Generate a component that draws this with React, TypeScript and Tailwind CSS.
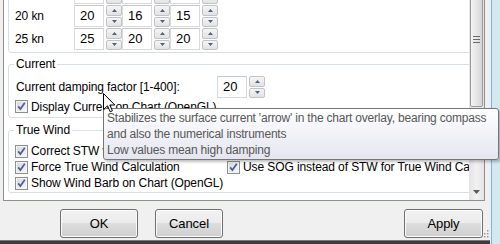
import type { ReactNode } from 'react'

// top row is scrolled almost out of view, only the bottom edge of its boxes shows
const speedRows = [
  { label: '', values: ['', '', ''] },
  { label: '20 kn', values: ['20', '16', '15'] },
  { label: '25 kn', values: ['25', '20', '20'] },
]

function SpinArrow({ down }: { down?: boolean }) {
  return (
    <svg width="5" height="3" viewBox="0 0 5 3">
      <path d={down ? 'M0 0 L5 0 L2.5 3 Z' : 'M0 3 L2.5 0 L5 3 Z'} fill="#4d6185" />
    </svg>
  )
}

function SpinButton() {
  return (
    <div className="flex h-[22px] w-[16px] flex-col gap-[1px]">
      <div className="flex flex-1 items-center justify-center rounded-[2px] border border-[#c3c3c3] bg-[linear-gradient(#f5f5f5,#e2e2e2)]">
        <SpinArrow />
      </div>
      <div className="flex flex-1 items-center justify-center rounded-[2px] border border-[#c3c3c3] bg-[linear-gradient(#f5f5f5,#e2e2e2)]">
        <SpinArrow down />
      </div>
    </div>
  )
}

function SpinBox({ value }: { value: string }) {
  return (
    <div className="flex items-center">
      <div className="flex h-[22px] w-[30px] items-center border border-[#d6d9dd] border-t-[#c4c7cc] bg-white pl-[5px] text-[13px]">
        {value}
      </div>
      <div className="ml-[2px]">
        <SpinButton />
      </div>
    </div>
  )
}

function CheckBox({ label }: { label: string }) {
  return (
    <div className="flex items-center whitespace-nowrap">
      <svg width="13" height="13" viewBox="0 0 13 13" className="shrink-0">
        <defs>
          <linearGradient id="cbg" x1="0" y1="0" x2="1" y2="1">
            <stop offset="0" stopColor="#d9d9d9" />
            <stop offset="1" stopColor="#f6f6f6" />
          </linearGradient>
        </defs>
        <rect x="0.5" y="0.5" width="12" height="12" fill="#f4f4f4" stroke="#8e8f8f" />
        <rect x="2" y="2" width="9" height="9" fill="url(#cbg)" />
        <path d="M3.2 6.4 L5.4 9 L9.8 2.8" fill="none" stroke="#4a5f97" strokeWidth="1.7" />
      </svg>
      <span className="ml-[3px]">{label}</span>
    </div>
  )
}

function GroupBox({
  title,
  className,
  children,
}: {
  title?: string
  className: string
  children: ReactNode
}) {
  return (
    <div className={`w-[520px] rounded-[3px] border border-[#d5dfe5] ${className}`}>
      {title && (
        <div className="-mt-[8px] ml-[5px] w-fit bg-white px-[2px] leading-[14px]">
          {title}
        </div>
      )}
      {children}
    </div>
  )
}

function Scrollbar() {
  return (
    <div className="flex w-[15px] flex-col bg-[linear-gradient(90deg,#e4e4e4,#f1f1f1,#e4e4e4)]">
      <div className="-mt-[27px] ml-[1px] flex h-[134px] w-[13px] flex-col items-center justify-center gap-[1px] rounded-[2px] border border-[#9a9a9a] bg-[linear-gradient(90deg,#f3f3f3,#e6e6e6_50%,#d6d6d6)]">
        {[0, 1, 2].map((i) => (
          <div key={i} className="h-[2px] w-[7px] border-t border-[#6a6a6a] border-b-white" />
        ))}
      </div>
      <div className="flex-1" />
      <div className="flex h-[17px] items-center justify-center">
        <svg width="7" height="4" viewBox="0 0 7 4">
          <path d="M0 0 L7 0 L3.5 4 Z" fill="#5a5a5a" />
        </svg>
      </div>
    </div>
  )
}

function DialogButton({ label, className }: { label: string; className: string }) {
  return (
    <div
      className={`flex h-[29px] items-center justify-center rounded-[3px] border border-[#707070] bg-[linear-gradient(#f2f2f2,#ebebeb_50%,#dddddd_50%,#cfcfcf)] text-[13px] shadow-[inset_0_0_0_1px_#fbfbfb] ${className}`}
    >
      {label}
    </div>
  )
}

export default function App() {
  return (
    <div className="relative flex h-[244px] w-[500px] overflow-hidden bg-[#f0f0f0] font-['Liberation_Sans',Arial,sans-serif] text-[12px] tracking-[-0.1px] text-black">
      <div className="flex w-[490px] flex-col">
        <div className="ml-[3px] flex h-[201px] w-[482px] border border-t-0 border-[#8e8f8f] bg-white">
          <div className="w-[465px] overflow-hidden pl-[4px]">
            <GroupBox className="-mt-[30px] h-[83px] pt-[11px] pl-[6px]">
              <div className="flex flex-col gap-[1px]">
                {speedRows.map((row, r) => (
                  <div key={r} className="flex items-center">
                    <div className="w-[59px]">{row.label}</div>
                    {row.values.map((v, i) => (
                      <SpinBox key={i} value={v} />
                    ))}
                  </div>
                ))}
              </div>
            </GroupBox>

            <GroupBox title="Current" className="mt-[11px] h-[54px]">
              <div className="mt-[5px] flex h-[22px] items-center pl-[7px]">
                <div className="w-[201px]">Current damping factor [1-400]:</div>
                <SpinBox value="20" />
              </div>
              <div className="flex h-[17px] items-center pl-[6px]">
                <CheckBox label="Display Current on Chart (OpenGL)" />
              </div>
            </GroupBox>

            <GroupBox title="True Wind" className="mt-[12px] h-[63px]">
              <div className="mt-[6px] grid grid-cols-[212px_auto] pl-[6px]">
                <div className="flex h-[16px] items-center">
                  <CheckBox label="Correct STW with Leeway" />
                </div>
                <div />
                <div className="flex h-[16px] items-center">
                  <CheckBox label="Force True Wind Calculation" />
                </div>
                <div className="flex h-[16px] items-center">
                  <CheckBox label="Use SOG instead of STW for True Wind Calculation" />
                </div>
                <div className="flex h-[16px] items-center">
                  <CheckBox label="Show Wind Barb on Chart (OpenGL)" />
                </div>
              </div>
            </GroupBox>
          </div>
          <Scrollbar />
        </div>

        <div className="mt-[8px] flex">
          <DialogButton label="OK" className="ml-[60px] w-[78px]" />
          <DialogButton label="Cancel" className="ml-[17px] w-[68px]" />
          <DialogButton label="Apply" className="ml-auto mr-[7px] w-[79px]" />
        </div>

        <div className="mt-[2px] flex-1 border-t border-[#7a7a7a] bg-[#3d3d3d]" />
      </div>

      <div className="w-[10px] border-l border-[#e8eef2] bg-[#d4e8f0] shadow-[inset_1px_0_0_#7fb6d8]" />

      <svg
        width="9"
        height="9"
        viewBox="0 0 9 9"
        className="absolute left-[480px] top-[229px]"
      >
        {[
          [7, 1],
          [4, 4],
          [7, 4],
          [1, 7],
          [4, 7],
          [7, 7],
        ].map(([x, y], i) => (
          <rect key={i} x={x} y={y} width="1.5" height="1.5" fill="#9a9a9a" />
        ))}
      </svg>

      <div className="absolute left-[103px] top-[108px] h-[52px] w-[396px] whitespace-nowrap rounded-[3px] border border-[#767676] bg-[linear-gradient(#ffffff,#e4e5f0)] px-[3px] pt-[1px] leading-[16px] tracking-[-0.2px] text-[#575757] shadow-[2px_2px_3px_rgba(0,0,0,0.25)]">
        <div>Stabilizes the surface current 'arrow' in the chart overlay, bearing compass</div>
        <div>and also the numerical instruments</div>
        <div>Low values mean high damping</div>
      </div>

      <svg
        width="13"
        height="20"
        viewBox="0 0 13 20"
        className="absolute left-[103px] top-[93px]"
      >
        <path
          d="M0.5 0.5 L0.5 16.5 L4.5 12.8 L7.2 18.8 L9.4 17.8 L6.8 12 L11.8 12 Z"
          fill="white"
          stroke="black"
          strokeWidth="1"
          strokeLinejoin="miter"
        />
      </svg>
    </div>
  )
}
